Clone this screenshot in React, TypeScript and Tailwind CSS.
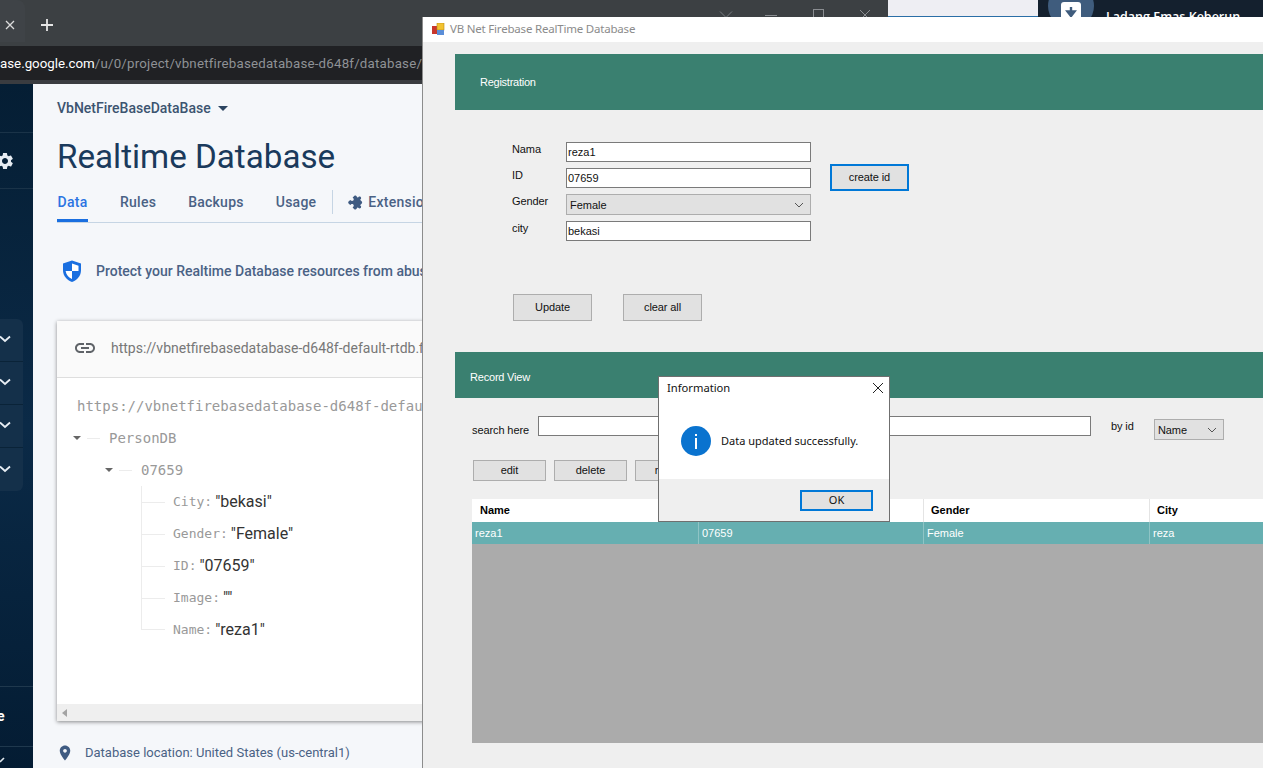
import React from "react";

const winFont = { fontFamily: '"Liberation Sans", Arial, sans-serif' };

function Mat({ d, size, className }: { d: string; size: number; className?: string }) {
  return (
    <svg width={size} height={size} viewBox="0 0 24 24" fill="currentColor" className={className}>
      <path d={d} />
    </svg>
  );
}

const GEAR =
  "M19.14 12.94c.04-.3.06-.61.06-.94 0-.32-.02-.64-.07-.94l2.03-1.58a.49.49 0 0 0 .12-.61l-1.92-3.32a.488.488 0 0 0-.59-.22l-2.39.96c-.5-.38-1.03-.7-1.62-.94l-.36-2.54a.484.484 0 0 0-.48-.41h-3.84c-.24 0-.43.17-.47.41l-.36 2.54c-.59.24-1.13.57-1.62.94l-2.39-.96c-.22-.08-.47 0-.59.22L2.74 8.87c-.12.21-.08.47.12.61l2.03 1.58c-.05.3-.09.63-.09.94s.02.64.07.94l-2.03 1.58a.49.49 0 0 0-.12.61l1.92 3.32c.12.22.37.29.59.22l2.39-.96c.5.38 1.03.7 1.62.94l.36 2.54c.05.24.24.41.48.41h3.84c.24 0 .44-.17.47-.41l.36-2.54c.59-.24 1.13-.56 1.62-.94l2.39.96c.22.08.47 0 .59-.22l1.92-3.32c.12-.22.07-.47-.12-.61l-2.01-1.58zM12 15.6c-1.98 0-3.6-1.62-3.6-3.6s1.62-3.6 3.6-3.6 3.6 1.62 3.6 3.6-1.62 3.6-3.6 3.6z";
const LINK =
  "M3.9 12c0-1.71 1.39-3.1 3.1-3.1h4V7H7c-2.76 0-5 2.24-5 5s2.24 5 5 5h4v-1.9H7c-1.71 0-3.1-1.39-3.1-3.1zM8 13h8v-2H8v2zm9-6h-4v1.9h4c1.71 0 3.1 1.39 3.1 3.1s-1.39 3.1-3.1 3.1h-4V17h4c2.76 0 5-2.24 5-5s-2.24-5-5-5z";
const PIN =
  "M12 2C8.13 2 5 5.13 5 9c0 5.25 7 13 7 13s7-7.75 7-13c0-3.87-3.13-7-7-7zm0 9.5c-1.38 0-2.5-1.12-2.5-2.5s1.12-2.5 2.5-2.5 2.5 1.12 2.5 2.5-1.12 2.5-2.5 2.5z";
const EXT =
  "M20.5 11H19V7c0-1.1-.9-2-2-2h-4V3.5C13 2.12 11.88 1 10.5 1S8 2.12 8 3.5V5H4c-1.1 0-1.99.9-1.99 2v3.8H3.5c1.49 0 2.7 1.21 2.7 2.7s-1.21 2.7-2.7 2.7H2V20c0 1.1.9 2 2 2h3.8v-1.5c0-1.49 1.21-2.7 2.7-2.7 1.49 0 2.7 1.21 2.7 2.7V22H17c1.1 0 2-.9 2-2v-4h1.5c1.38 0 2.5-1.12 2.5-2.5S21.88 11 20.5 11z";

function Chevron() {
  return (
    <div className="flex h-[43px] items-center border-b border-[#0a2338] pb-[2px] last:border-b-0">
      <svg width="12" height="8" viewBox="0 0 12 8" className="-ml-[1px]">
        <path d="M1 1.5 L6 6 L11 1.5" fill="none" stroke="#e8eef4" strokeWidth="1.8" />
      </svg>
    </div>
  );
}

function Sidebar() {
  return (
    <div className="flex h-[684px] w-[33px] shrink-0 flex-col overflow-hidden bg-gradient-to-b from-[#051e34] via-[#0b2a47] to-[#041c33]">
      <div className="mt-[48px] flex h-[57px] items-center border-y border-[#1a3348]">
        <Mat d={GEAR} size={20} className="-ml-[5px] text-[#e6ecf2]" />
      </div>
      <div className="mt-[130px] h-[172px] w-[23px] rounded-r-[6px] bg-[#14304a]">
        <Chevron />
        <Chevron />
        <Chevron />
        <Chevron />
      </div>
      <div className="mt-[195px] flex h-[61px] items-center border-y border-[#1f384d]">
        <span className="-ml-[3px] text-[14px] font-bold text-white" style={{ fontFamily: "Roboto, sans-serif" }}>
          e
        </span>
      </div>
      <div className="pt-[9px]">
        <svg width="6" height="8" viewBox="0 0 6 8">
          <path d="M0 6 L4 2" stroke="#dfe6ec" strokeWidth="1.6" />
        </svg>
      </div>
    </div>
  );
}

function TreeLeaf({ k, v, last }: { k: string; v: string; last?: boolean }) {
  return (
    <div className="flex h-[32px] items-center whitespace-nowrap">
      {last ? (
        <span className="flex h-[16px] w-[24px] items-end self-start border-l border-[#ececec]">
          <span className="h-px w-full bg-[#ececec]" />
        </span>
      ) : (
        <span className="flex h-full w-[24px] items-center border-l border-[#ececec]">
          <span className="h-px w-full bg-[#ececec]" />
        </span>
      )}
      <span className="ml-[8px] text-[13px] text-[#999]" style={{ fontFamily: '"DejaVu Sans Mono", monospace' }}>
        {k}:
      </span>
      <span className="ml-[3px] -mt-[1px] text-[16px] text-[#333]" style={{ fontFamily: "Roboto, sans-serif" }}>
        {v}
      </span>
    </div>
  );
}

function TreeNode({ label, indent }: { label: string; indent: string }) {
  return (
    <div className={`flex h-[32px] items-center ${indent}`}>
      <span className="relative flex h-full w-[10px] items-center justify-center">
        <span className="h-0 w-0 border-x-[4px] border-t-[4px] border-x-transparent border-t-[#666]" />
      </span>
      <span className="ml-[5px] h-px w-[13px] bg-[#ececec]" />
      <span className="ml-[9px] text-[14px] text-[#999]" style={{ fontFamily: '"DejaVu Sans Mono", monospace' }}>
        {label}
      </span>
    </div>
  );
}

function Firebase() {
  const ui = { fontFamily: "Roboto, sans-serif" };
  return (
    <div className="h-[684px] min-w-0 flex-1 overflow-hidden whitespace-nowrap bg-[#f5f7fa]" style={ui}>
      <div className="ml-[24px] mt-[14px] flex h-[20px] items-center text-[14px] font-medium text-[#3c5470]">
        VbNetFireBaseDataBase
        <span className="ml-[7px] mt-[1px] h-0 w-0 border-x-[5px] border-t-[5px] border-x-transparent border-t-[#2c4460]" />
      </div>
      <div className="ml-[24px] mt-[19px] h-[40px] text-[33.2px] leading-[40px] text-[#1a3a5c]">Realtime Database</div>
      <div className="ml-[24px] mt-[5px] flex h-[41px] items-center border-b border-[#c6d5e4] text-[14px] font-medium tracking-[0.25px] text-[#4a6285]">
        <div className="flex h-full w-[31px] items-center justify-center border-b-[3px] border-[#1a6fe0] pt-[3px] text-[#2b74e2]">
          Data
        </div>
        <span className="ml-[32px]">Rules</span>
        <span className="ml-[32px]">Backups</span>
        <span className="ml-[32px]">Usage</span>
        <span className="ml-[16px] h-[24px] w-px bg-[#c6d5e4]" />
        <Mat d={EXT} size={15} className="ml-[16px] rotate-45 text-[#3f5b82]" />
        <span className="ml-[4px]">Extensions</span>
      </div>
      <div className="ml-[29px] mt-[36px] flex h-[24px] items-center text-[14px] font-medium text-[#4a6285]">
        <svg width="20" height="24" viewBox="0 0 20 24">
          <path d="M10 1.5 L19 4.5 V11 C19 17 15 21 10 23 C5 21 1 17 1 11 V4.5 Z" fill="#1a6fe0" />
          <path d="M10 4.5 L16.5 6.7 V12 H10 Z M10 12 V20 C6.8 18.6 4.2 15.8 3.6 12 Z" fill="#fff" />
        </svg>
        <span className="ml-[14px]">Protect your Realtime Database resources from abuse</span>
      </div>
      <div className="ml-[24px] mt-[38px] flex h-[400px] flex-col overflow-hidden bg-white shadow-[0_1px_4px_rgba(0,0,0,0.45)]">
        <div className="flex h-[57px] shrink-0 items-center border-b border-[#dedede] bg-[#fafafa] pb-[2px] pl-[16px] text-[14px] text-[#777]">
          <Mat d={LINK} size={24} className="text-[#5f6368]" />
          <span className="ml-[14px]">https://vbnetfirebasedatabase-d648f-default-rtdb.firebaseio.com/</span>
        </div>
        <div className="min-h-0 flex-1 pl-[20px] pt-[12px]">
          <div
            className="flex h-[32px] items-center text-[14px] text-[#999]"
            style={{ fontFamily: '"DejaVu Sans Mono", monospace' }}
          >
            https://vbnetfirebasedatabase-d648f-default-rtdb
          </div>
          <TreeNode label="PersonDB" indent="-ml-[5px]" />
          <TreeNode label="07659" indent="ml-[27px]" />
          <div className="ml-[64px]">
            <TreeLeaf k="City" v={'"bekasi"'} />
            <TreeLeaf k="Gender" v={'"Female"'} />
            <TreeLeaf k="ID" v={'"07659"'} />
            <TreeLeaf k="Image" v={'""'} />
            <TreeLeaf k="Name" v={'"reza1"'} last />
          </div>
        </div>
        <div className="flex h-[17px] shrink-0 items-center bg-[#efefef] pl-[5px]">
          <span className="h-0 w-0 border-y-[4px] border-r-[5px] border-y-transparent border-r-[#a3a3a3]" />
        </div>
      </div>
      <div className="ml-[23px] mt-[22px] flex h-[20px] items-center text-[13px] text-[#4a6285]">
        <Mat d={PIN} size={18} className="text-[#3f5b82]" />
        <span className="ml-[11px]">Database location: United States (us-central1)</span>
      </div>
    </div>
  );
}

function TopChrome() {
  return (
    <div className="flex h-[84px] flex-col">
      <div className="flex h-[46px]">
        <div className="flex w-[888px] items-start bg-[#3c4043] text-white">
          <div className="flex h-[42px] w-[25px] items-center justify-center rounded-tr-[8px] bg-[#3f4347] pt-[8px]">
            <svg width="10" height="10" viewBox="0 0 10 10" className="-ml-[6px]">
              <path d="M1 1 L9 9 M9 1 L1 9" stroke="#dcdcdc" strokeWidth="1.3" />
            </svg>
          </div>
          <svg width="14" height="14" viewBox="0 0 14 14" className="ml-[15px] mt-[18px]">
            <path d="M7 1 V13 M1 7 H13" stroke="#e6e6e6" strokeWidth="1.8" />
          </svg>
          <svg width="14" height="8" viewBox="0 0 14 8" className="ml-[665px] mt-[11px]">
            <path d="M1 0.5 L7 6.5 L13 0.5" fill="none" stroke="#777b80" strokeWidth="1" />
          </svg>
          <span className="ml-[32px] mt-[15px] h-px w-[12px] bg-[#8a8d91]" />
          <span className="ml-[36px] mt-[9px] h-[11px] w-[11px] border border-[#8a8d91]" />
          <svg width="12" height="12" viewBox="0 0 12 12" className="ml-[35px] mt-[9px]">
            <path d="M1 1 L11 11 M11 1 L1 11" stroke="#8a8d91" strokeWidth="1" />
          </svg>
        </div>
        <div className="w-[150px] border-b-[30px] border-[#2a6ea6] bg-[#eeeef3]">
          <div className="h-[16px]" />
        </div>
        <div className="flex min-w-0 flex-1 items-start overflow-hidden bg-[#14202e]">
          <div className="-mt-[17px] ml-[10px] flex h-[46px] w-[46px] items-center justify-center rounded-full bg-[#3f5c7d]">
            <div className="mt-[12px] flex h-[20px] w-[20px] items-center justify-center rounded-[3px] bg-white">
              <svg width="12" height="12" viewBox="0 0 12 12">
                <path d="M6 1 V7 M2.5 5.5 L6 10 L9.5 5.5 Z" stroke="#3f5c7d" strokeWidth="2.4" fill="#3f5c7d" />
              </svg>
            </div>
          </div>
          <span
            className="ml-[12px] mt-[8px] whitespace-nowrap text-[12.5px] font-semibold text-white"
            style={{ fontFamily: '"Open Sans", sans-serif' }}
          >
            Ladang Emas Keberun
          </span>
        </div>
      </div>
      <div
        className="flex h-[34px] items-center overflow-hidden whitespace-nowrap bg-[#202124] pt-[2px] text-[13.3px] text-[#8f9296]"
        style={{ fontFamily: "Roboto, sans-serif" }}
      >
        <span className="text-white">ase.google.com</span>
        <span className="tracking-[0.2px]">/u/0/project/vbnetfirebasedatabase-d648f/database/</span>
      </div>
      <div className="h-[4px] bg-[#3a3c40]" />
    </div>
  );
}

function WinButton({ label, className }: { label: string; className: string }) {
  return (
    <div className={`flex items-center justify-center bg-[#e1e1e1] text-[11px] tracking-[-0.1px] text-[#111] ${className}`}>
      {label}
    </div>
  );
}

function GreyBtn({ label, w = "w-[79px]", h = "h-[27px]" }: { label: string; w?: string; h?: string }) {
  return <WinButton label={label} className={`${w} ${h} border border-[#adadad]`} />;
}

function TextBox({ value, w = "w-[245px]" }: { value?: string; w?: string }) {
  return (
    <div className={`flex h-[20px] ${w} items-center border border-[#7a7a7a] bg-white pl-[1px] text-[11px] text-[#111]`}>
      {value}
    </div>
  );
}

function Combo({ value, w, h }: { value: string; w: string; h: string }) {
  return (
    <div className={`flex items-center justify-between border border-[#adadad] bg-[#e1e1e1] pl-[3px] pr-[6px] text-[11px] text-[#111] ${w} ${h}`}>
      <span className="pt-px">{value}</span>
      <svg width="10" height="6" viewBox="0 0 10 6">
        <path d="M1 1 L5 5 L9 1" fill="none" stroke="#555" strokeWidth="1" />
      </svg>
    </div>
  );
}

function FormRow({ label, children }: { label: string; children: React.ReactNode }) {
  return (
    <div className="flex items-start">
      <span className="w-[54px] text-[11px] leading-[14px] tracking-[-0.1px] text-[#111]">{label}</span>
      {children}
    </div>
  );
}

function VbWindow() {
  const cols = ["w-[227px]", "w-[225px]", "w-[226px]", "flex-1"];
  const headPad = ["pl-[8px]", "pl-[8px]", "pl-[7px]", "pl-[7px]"];
  const headers = ["Name", "ID", "Gender", "City"];
  const cells = ["reza1", "07659", "Female", "reza"];
  return (
    <div
      className="absolute bottom-0 left-[422px] right-0 top-[17px] border-l border-[#8c8c8c] bg-[#efefef] whitespace-nowrap"
      style={winFont}
    >
      <div className="flex h-[25px] items-center bg-white pb-[1px] pl-[9px]">
        <svg width="13" height="13" viewBox="0 0 13 13">
          <rect x="0" y="3" width="5" height="8" fill="#c8362c" />
          <rect x="5" y="0" width="7" height="7" fill="#f2c230" stroke="#b98a16" strokeWidth="0.6" />
          <rect x="5" y="7" width="7" height="5" fill="#5b8ed8" />
        </svg>
        <span
          className="ml-[5px] text-[11.5px] text-[#8b8b8b]"
          style={{ fontFamily: '"Noto Sans", sans-serif', letterSpacing: "-0.2px" }}
        >
          VB Net Firebase RealTime Database
        </span>
      </div>

      <div className="ml-[32px] mt-[12px] flex h-[56px] items-center bg-[#3a8070] pl-[25px] text-[11px] tracking-[-0.25px] text-white">
        Registration
      </div>

      <div className="ml-[89px] mt-[32px] flex items-start">
        <div className="flex flex-col gap-[6px]">
          <FormRow label="Nama"><TextBox value="reza1" /></FormRow>
          <FormRow label="ID"><TextBox value="07659" /></FormRow>
          <FormRow label="Gender"><Combo value="Female" w="w-[245px]" h="h-[21px]" /></FormRow>
          <FormRow label="city"><TextBox value="bekasi" /></FormRow>
        </div>
        <WinButton label="create id" className="ml-[19px] mt-[22px] h-[27px] w-[79px] border-2 border-[#0078d7]" />
      </div>

      <div className="ml-[90px] mt-[53px] flex gap-[31px]">
        <GreyBtn label="Update" />
        <GreyBtn label="clear all" />
      </div>

      <div className="ml-[32px] mt-[31px] flex h-[46px] items-center bg-[#3a8070] pl-[15px] pt-[4px] text-[11px] tracking-[-0.2px] text-white">
        Record View
      </div>

      <div className="ml-[49px] mt-[18px] flex h-[24px] items-start text-[11px] tracking-[-0.1px] text-[#111]">
        <span className="mt-[7px] w-[66px] leading-[14px]">search here</span>
        <TextBox w="w-[553px]" />
        <span className="ml-[20px] mt-[3px] w-[43px] leading-[14px]">by id</span>
        <div className="mt-[3px]">
          <Combo value="Name" w="w-[70px]" h="h-[21px]" />
        </div>
      </div>

      <div className="ml-[50px] mt-[20px] flex gap-[8px]">
        <GreyBtn label="edit" w="w-[73px]" h="h-[21px]" />
        <GreyBtn label="delete" w="w-[73px]" h="h-[21px]" />
        <GreyBtn label="refresh" w="w-[73px]" h="h-[21px]" />
      </div>

      <div className="ml-[49px] mt-[18px] h-[244px]">
        <div className="flex h-[23px] bg-white text-[11px] font-bold text-black">
          {headers.map((t, i) => (
            <div key={t} className={`flex items-center ${headPad[i]} ${cols[i]} ${i < 3 ? "border-r border-[#e4e4e4]" : ""}`}>
              {t}
            </div>
          ))}
        </div>
        <div className="flex h-[22px] bg-[#66afb1] text-[11px] text-white">
          {cells.map((t, i) => (
            <div key={t} className={`flex items-center pl-[3px] pt-px ${cols[i]} ${i < 3 ? "border-r border-[#8fc4c5]" : ""}`}>
              {t}
            </div>
          ))}
        </div>
        <div className="h-[199px] bg-[#ababab]" />
      </div>
    </div>
  );
}

function Dialog() {
  const f = { fontFamily: '"Noto Sans", sans-serif' };
  return (
    <div className="absolute left-[658px] top-[376px] flex h-[146px] w-[232px] flex-col border border-[#6f6f6f] bg-white" style={f}>
      <div className="flex h-[22px] shrink-0 items-center justify-between pl-[8px] pr-[5px] text-[11.2px] text-[#111]">
        <span>Information</span>
        <svg width="12" height="12" viewBox="0 0 12 12">
          <path d="M1 1 L11 11 M11 1 L1 11" stroke="#222" strokeWidth="1" />
        </svg>
      </div>
      <div className="flex min-h-0 flex-1 items-center pl-[22px] pt-[3px]">
        <svg width="30" height="30" viewBox="0 0 30 30">
          <circle cx="15" cy="15" r="15" fill="#0a73cf" />
          <rect x="14" y="12" width="2" height="11" fill="#fff" />
          <rect x="14" y="8" width="2" height="2" fill="#fff" />
        </svg>
        <span className="ml-[10px] mt-[2px] text-[11px] text-[#111]">Data updated successfully.</span>
      </div>
      <div className="flex h-[42px] shrink-0 items-start justify-end bg-[#efefef] pr-[16px] pt-[11px]">
        <div className="flex h-[21px] w-[73px] items-center justify-center border-2 border-[#0078d7] bg-[#e1e1e1] text-[11px] text-[#111]">
          OK
        </div>
      </div>
    </div>
  );
}

export default function App() {
  return (
    <div className="relative h-[768px] w-[1263px] overflow-hidden bg-[#f5f7fa]">
      <TopChrome />
      <div className="flex">
        <Sidebar />
        <Firebase />
      </div>
      <VbWindow />
      <Dialog />
    </div>
  );
}
